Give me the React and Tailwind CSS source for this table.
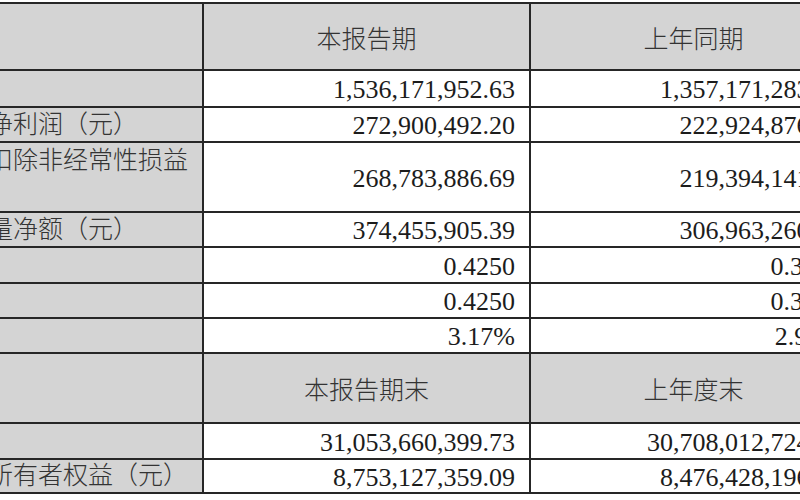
const rows = [
  { kind: "head", h: "h-[67px]", a: "本报告期", b: "上年同期" },
  { label: "营业收入（元）", a: "1,536,171,952.63", b: "1,357,171,283.26", h: "h-[37px]" },
  { label: "归属于上市公司股东的净利润（元）", a: "272,900,492.20", b: "222,924,876.52", h: "h-[35px]" },
  {
    label: "归属于上市公司股东的扣除非经常性损益",
    label2: "的净利润（元）",
    a: "268,783,886.69",
    b: "219,394,141.03",
    h: "h-[70px]",
  },
  { label: "经营活动产生的现金流量净额（元）", a: "374,455,905.39", b: "306,963,260.74", h: "h-[35px]" },
  { label: "基本每股收益（元/股）", a: "0.4250", b: "0.3500", h: "h-[36px]" },
  { label: "稀释每股收益（元/股）", a: "0.4250", b: "0.3500", h: "h-[35px]" },
  { label: "加权平均净资产收益率", a: "3.17%", b: "2.92%", h: "h-[35px]" },
  { kind: "head", h: "h-[70px]", a: "本报告期末", b: "上年度末" },
  { label: "总资产（元）", a: "31,053,660,399.73", b: "30,708,012,724.63", h: "h-[36px]" },
  { label: "归属于上市公司股东的所有者权益（元）", a: "8,753,127,359.09", b: "8,476,428,196.18", h: "h-[34px]" },
];

const cell = "border-r-2 border-b-2 border-[#262626] flex overflow-hidden";

export default function App() {
  return (
    <div
      className="w-[800px] h-[500px] overflow-hidden bg-white"
      style={{ fontFamily: '"Liberation Serif", "Noto Sans CJK SC", serif' }}
    >
      <div className="mt-[2px] ml-[-267px] w-[1125px] border-t-2 border-l-2 border-[#262626] grid grid-cols-[469px_327px_327px]">
        {rows.map((r, i) =>
          r.kind === "head" ? (
            <div key={i} className="contents">
              <div className={`${cell} ${r.h} bg-[#d4d4d4]`} />
              <div className={`${cell} ${r.h} bg-[#d4d4d4] items-center justify-center pt-[6px] text-[25px] font-light text-[#333333]`}>
                {r.a}
              </div>
              <div className={`${cell} ${r.h} bg-[#d4d4d4] items-center justify-center pt-[6px] text-[25px] font-light text-[#333333]`}>
                {r.b}
              </div>
            </div>
          ) : (
            <div key={i} className="contents">
              <div className={`${cell} ${r.h} bg-[#d4d4d4] flex-col justify-center pl-[3px] text-[25px] font-light leading-[32px] text-[#333333] whitespace-nowrap`}>
                <span>{r.label}</span>
                {r.label2 && <span>{r.label2}</span>}
              </div>
              <div className={`${cell} ${r.h} bg-white items-center justify-end pr-[14px] pt-[2px] text-[26px] text-[#1c1c1c] whitespace-nowrap`}>
                {r.a}
              </div>
              <div className={`${cell} ${r.h} bg-white items-center justify-end pr-[14px] pt-[2px] text-[26px] text-[#1c1c1c] whitespace-nowrap`}>
                {r.b}
              </div>
            </div>
          )
        )}
      </div>
    </div>
  );
}
